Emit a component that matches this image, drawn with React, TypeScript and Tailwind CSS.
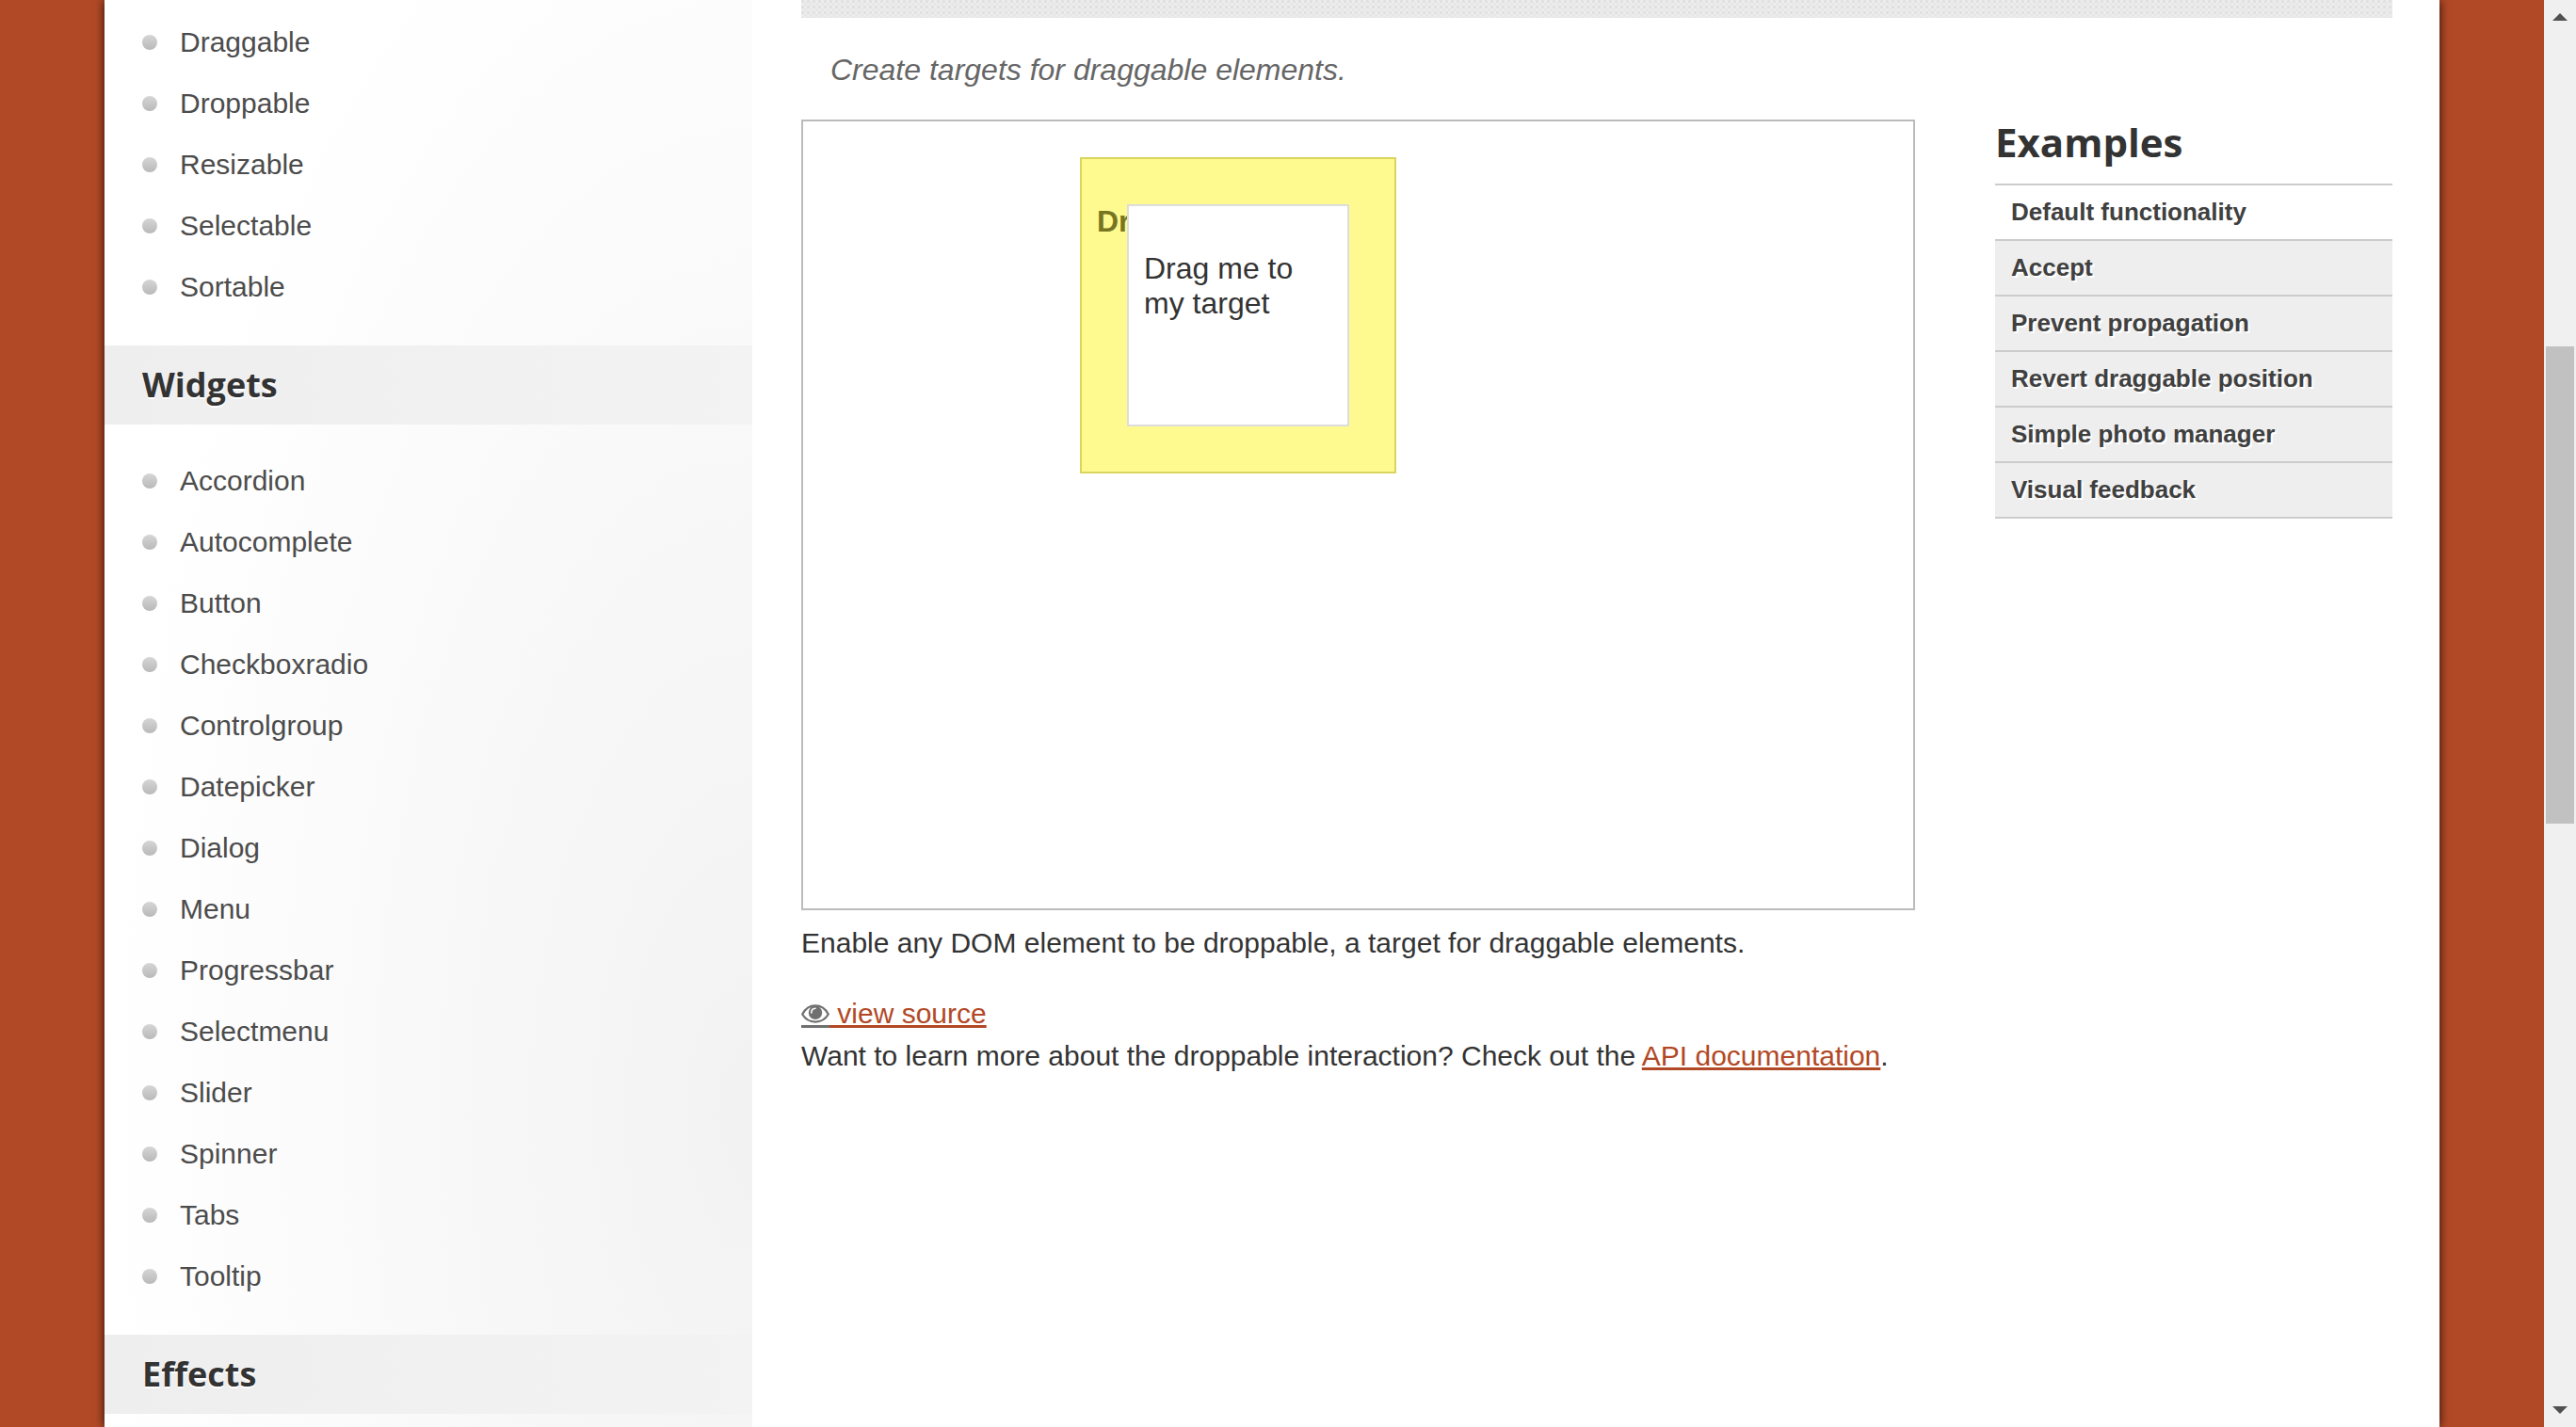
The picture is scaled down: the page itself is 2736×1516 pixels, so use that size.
import React from "react";

const interactions = ["Draggable", "Droppable", "Resizable", "Selectable", "Sortable"];
const widgets = [
  "Accordion",
  "Autocomplete",
  "Button",
  "Checkboxradio",
  "Controlgroup",
  "Datepicker",
  "Dialog",
  "Menu",
  "Progressbar",
  "Selectmenu",
  "Slider",
  "Spinner",
  "Tabs",
  "Tooltip",
];
const examples = [
  "Default functionality",
  "Accept",
  "Prevent propagation",
  "Revert draggable position",
  "Simple photo manager",
  "Visual feedback",
];

function NavList({ items }: { items: string[] }) {
  return (
    <ul className="pb-[30px] pl-10">
      {items.map((item) => (
        <li key={item} className="flex h-[65px] items-center gap-6">
          <span className="size-4 shrink-0 rounded-full bg-linear-to-b from-[#d6d6d6] to-[#b9b9b9]" />
          <a href="#" className="text-[30px] leading-[45px] text-[#4c4c4c]">
            {item}
          </a>
        </li>
      ))}
    </ul>
  );
}

function NavHeading({ children }: { children: string }) {
  return (
    <h3 className="flex h-[84px] items-center bg-linear-to-r from-[#eeeeee] to-[#f3f3f3] pb-px pl-10 font-['Open_Sans','Noto_Sans',sans-serif] text-[36px] leading-[48px] font-bold text-[#333] [text-shadow:0_2px_0_#fff]">
      {children}
    </h3>
  );
}

function EyeIcon() {
  return (
    <svg
      viewBox="0 0 30 20"
      className="-mb-[5px] box-content inline-block h-5 w-[30px] border-b-3 border-[#707070] pb-[2px] align-baseline"
      aria-hidden="true"
    >
      <path d="M1.2 10.500C7.500-1.600 22.500-1.600 28.800 10.500 22.500 21.200 7.500 21.200 1.200 10.500Z" fill="#fff" stroke="#707070" strokeWidth="2.200" />
      <circle cx="15" cy="8.800" r="7.200" fill="#707070" />
      <path d="M10.800 9c0-2.900 1.700-4.600 4.200-4.800" fill="none" stroke="#fff" strokeWidth="1.600" strokeLinecap="round" />
    </svg>
  );
}

function ScrollRail() {
  return (
    <div className="flex w-[34px] shrink-0 flex-col items-center justify-between bg-[#f0f0f0] py-[14px]" aria-hidden="true">
      <svg viewBox="0 0 16 8" className="h-2 w-4">
        <path d="M0 8 8 0l8 8Z" fill="#505050" />
      </svg>
      <div className="flex w-full grow flex-col items-center pt-[346px]">
        <div className="h-[507px] w-[30px] bg-[#c1c1c1]" />
      </div>
      <svg viewBox="0 0 16 8" className="h-2 w-4">
        <path d="M0 0h16L8 8Z" fill="#505050" />
      </svg>
    </div>
  );
}

export default function App() {
  return (
    <div className="flex h-screen overflow-hidden font-['Liberation_Sans',Arial,sans-serif] text-[#333]">
      <div className="flex min-w-0 grow bg-[#b24926] px-[111px]">
        <div className="flex min-w-0 grow bg-white shadow-[0_0_10px_rgba(0,0,0,0.8)]">
          <nav className="w-[688px] shrink-0 bg-[radial-gradient(ellipse_100%_95%_at_100%_78%,#f2f2f2,#fff)] pt-3">
            <NavList items={interactions} />
            <NavHeading>Widgets</NavHeading>
            <div className="pt-[27px]">
              <NavList items={widgets} />
            </div>
            <NavHeading>Effects</NavHeading>
          </nav>

          <main className="min-w-0 grow pr-[50px] pl-[52px]">
            <div className="h-[19px] bg-[#ececec] bg-[radial-gradient(circle_at_25%_25%,#dfdfdf_1px,transparent_2px),radial-gradient(circle_at_75%_75%,#e6e6e6_1px,transparent_2px)] bg-size-[6px_6px]" />
            <p className="pt-[31px] pl-[31px] text-[32px] leading-[48px] text-[#666] italic">Create targets for draggable elements.</p>

            <div className="flex items-start gap-[85px] pt-[29px]">
              <div className="min-w-0 grow">
                <div className="relative h-[840px] border-2 border-[#bbb] bg-white text-[32px] leading-[37px]">
                  <div className="absolute top-[38px] left-[294px] size-[336px] border-2 border-[#dad55e] bg-[#fffa90] p-4 font-bold text-[#777620]">
                    <p className="my-8">Dropped!</p>
                  </div>
                  <div className="absolute top-[88px] left-[344px] size-[236px] border-2 border-[#ddd] bg-white p-4">
                    <p className="my-8">Drag me to my target</p>
                  </div>
                </div>
                <div className="pt-3 text-[30px] leading-[45px]">
                  <p>Enable any DOM element to be droppable, a target for draggable elements.</p>
                  <p className="pt-[30px]">
                    <a href="#" className="text-[#b24926] underline decoration-3 underline-offset-2">
                      <EyeIcon /> view source
                    </a>
                  </p>
                  <p>
                    Want to learn more about the droppable interaction? Check out the{" "}
                    <a href="#" className="text-[#b24926] underline decoration-3 underline-offset-2">
                      API documentation
                    </a>
                    .
                  </p>
                </div>
              </div>

              <aside className="w-[422px] shrink-0">
                <h2 className="pb-5 font-['Open_Sans','Noto_Sans',sans-serif] text-[42px] leading-[48px] font-bold">
                  Examples
                </h2>
                <ul className="border-t-2 border-[#ccc]">
                  {examples.map((item, i) => (
                    <li key={item} className={i === 0 ? "border-b-2 border-[#ccc]" : "border-b-2 border-[#ccc] bg-[#eee]"}>
                      <a href="#" className="block px-[17px] text-[26px] leading-[57px] font-bold text-[#404040] [text-shadow:2px_2px_0_#fff]">
                        {item}
                      </a>
                    </li>
                  ))}
                </ul>
              </aside>
            </div>
          </main>
        </div>
      </div>
      <ScrollRail />
    </div>
  );
}
